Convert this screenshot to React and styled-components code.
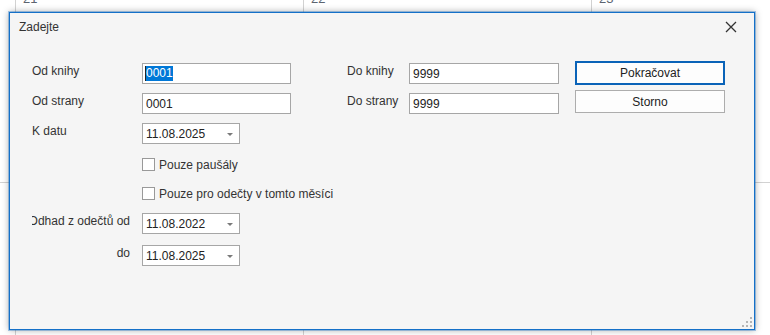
import React from "react";
import styled, { createGlobalStyle } from "styled-components";

const Global = createGlobalStyle`
  html, body { margin: 0; padding: 0; background: #ffffff; }
  body { font-family: "Liberation Sans", Arial, sans-serif; font-size: 12px; color: #333; }
  * { box-sizing: border-box; }
`;

const Page = styled.div`
  position: relative;
  width: 770px;
  height: 335px;
  overflow: hidden;
  background: #fff;
`;

const Calendar = styled.div`
  display: grid;
  grid-template-columns: 16px 288px 288px 288px;
  grid-template-rows: 197px 197px;
  margin-top: -14px;
`;

const DayCell = styled.div`
  border-right: 1px solid #d2d2d2;
  border-bottom: 1px solid #d2d2d2;
  padding: 5px 0 0 7px;
  font-size: 13px;
  line-height: 15px;
  color: #5c6470;
`;

const Dialog = styled.div`
  position: absolute;
  left: 9px;
  top: 12px;
  width: 746px;
  height: 318px;
  border: 1px solid #1470c8;
  outline: 1px solid rgba(20, 112, 200, 0.35);
  background: #f5f5f5;
  box-shadow: 0 0 7px rgba(0, 0, 0, 0.35);
  display: flex;
  flex-direction: column;
`;

const TitleBar = styled.div`
  height: 28px;
  display: flex;
  align-items: center;
  justify-content: space-between;
  padding: 0 8px 0 9px;
`;

const Title = styled.span`
  font-size: 12px;
  color: #333;
`;

const CloseButton = styled.div`
  width: 30px;
  height: 28px;
  display: flex;
  align-items: center;
  justify-content: center;
`;

const Form = styled.div`
  display: flex;
  align-items: flex-start;
  margin: 22px 0 0 22px;
`;

const LeftGrid = styled.div`
  display: grid;
  grid-template-columns: 110px 149px;
  grid-template-rows: 30px 30px 31px 29px 30px 32px 21px;
`;

const RightGrid = styled.div`
  display: grid;
  grid-template-columns: 62px 150px;
  grid-template-rows: 30px 21px;
  margin-left: 56px;
`;

const ButtonColumn = styled.div`
  display: flex;
  flex-direction: column;
  gap: 5px;
  width: 150px;
  margin: -2px 0 0 16px;
`;

const Label = styled.div`
  grid-column: 1;
  display: flex;
  justify-content: ${(p) => (p.$right ? "flex-end" : "flex-start")};
  padding-right: ${(p) => (p.$right ? "12px" : "0")};
  overflow: hidden;
  white-space: nowrap;
  line-height: 16px;
  height: 16px;
  font-size: 12px;
  color: #333;
`;

const Field = styled.div`
  grid-column: 2;
  width: ${(p) => p.$width || "149px"};
  height: 21px;
  background: #fff;
  border: 1px solid #a6a6a6;
  padding-left: 3px;
  display: flex;
  align-items: center;
  justify-content: space-between;
  font-size: 12px;
  color: #222;
  white-space: nowrap;
`;

const Selected = styled.span`
  background: #0078d7;
  color: #fff;
  line-height: 15px;
  border-left: 1px solid #222;
  margin-left: -1px;
`;

const Arrow = styled.span`
  width: 0;
  height: 0;
  border-left: 3px solid transparent;
  border-right: 3px solid transparent;
  border-top: 3px solid #7a7a7a;
  margin-right: 6px;
  margin-top: 1px;
`;

const CheckRow = styled.div`
  grid-column: 2;
  display: flex;
  align-items: center;
  height: 21px;
  gap: 4px;
  white-space: nowrap;
  font-size: 12px;
  color: #333;
`;

const Box = styled.span`
  width: 13px;
  height: 13px;
  border: 1px solid #999;
  background: #fff;
  flex: none;
`;

const Button = styled.div`
  height: ${(p) => (p.$primary ? "24px" : "23px")};
  border: ${(p) => (p.$primary ? "2px solid #0a63b8" : "1px solid #adadad")};
  background: #fdfdfd;
  display: flex;
  align-items: center;
  justify-content: center;
  font-size: 12px;
  color: #222;
`;

const Grip = styled.svg`
  position: absolute;
  right: 1px;
  bottom: 1px;
`;

const DateField = ({ value }) => (
  <Field $width="98px">
    <span>{value}</span>
    <Arrow />
  </Field>
);

export default function App() {
  return (
    <Page>
      <Global />
      <Calendar>
        <DayCell />
        <DayCell>21</DayCell>
        <DayCell>22</DayCell>
        <DayCell>23</DayCell>
        <DayCell />
        <DayCell />
        <DayCell />
        <DayCell />
      </Calendar>
      <Dialog>
        <TitleBar>
          <Title>Zadejte</Title>
          <CloseButton>
            <svg width="12" height="12" viewBox="0 0 12 12">
              <path d="M1 1 L11 11 M11 1 L1 11" stroke="#333" strokeWidth="1.3" fill="none" />
            </svg>
          </CloseButton>
        </TitleBar>
        <Form>
          <LeftGrid>
            <Label>Od knihy</Label>
            <Field>
              <Selected>0001</Selected>
            </Field>
            <Label>Od strany</Label>
            <Field>
              <span>0001</span>
            </Field>
            <Label>K datu</Label>
            <DateField value="11.08.2025" />
            <CheckRow>
              <Box />
              Pouze paušály
            </CheckRow>
            <CheckRow>
              <Box />
              Pouze pro odečty v tomto měsíci
            </CheckRow>
            <Label $right>Odhad z odečtů od</Label>
            <DateField value="11.08.2022" />
            <Label $right>do</Label>
            <DateField value="11.08.2025" />
          </LeftGrid>
          <RightGrid>
            <Label>Do knihy</Label>
            <Field $width="150px">
              <span>9999</span>
            </Field>
            <Label>Do strany</Label>
            <Field $width="150px">
              <span>9999</span>
            </Field>
          </RightGrid>
          <ButtonColumn>
            <Button $primary>Pokračovat</Button>
            <Button>Storno</Button>
          </ButtonColumn>
        </Form>
        <Grip width="11" height="11" viewBox="0 0 11 11">
          <g fill="#b5b5b5">
            <rect x="8" y="0" width="2" height="2" />
            <rect x="8" y="4" width="2" height="2" />
            <rect x="4" y="4" width="2" height="2" />
            <rect x="8" y="8" width="2" height="2" />
            <rect x="4" y="8" width="2" height="2" />
            <rect x="0" y="8" width="2" height="2" />
          </g>
        </Grip>
      </Dialog>
    </Page>
  );
}
